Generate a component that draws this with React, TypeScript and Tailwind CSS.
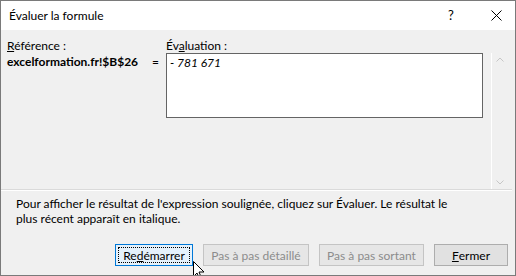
import React from 'react'

const FONT = { fontFamily: 'Lato, "Noto Sans", "Liberation Sans", sans-serif' }

function Btn({ children, w, kind }: { children: React.ReactNode; w: string; kind: 'focus' | 'off' | 'on' }) {
  if (kind === 'focus')
    return (
      <div className={`${w} h-[22px] border border-[#0078d7] bg-[#e5f1fb] p-[2px]`}>
        <div className="h-full w-full border border-dotted border-black flex items-center justify-center text-black">{children}</div>
      </div>
    )
  return (
    <div className={`${w} h-[22px] border flex items-center justify-center ${kind === 'off' ? 'border-[#c4c4c4] bg-[#e6e6e6] text-[#8c8c8c]' : 'border-[#adadad] bg-[#e1e1e1] text-black'}`}>
      {children}
    </div>
  )
}

export default function App() {
  return (
    <div className="relative w-[516px] h-[276px] border border-[#7a7a7a] bg-[#f0f0f0] flex flex-col text-[12px] leading-[15px] text-black overflow-hidden" style={FONT}>
      {/* title bar */}
      <div className="h-[29px] bg-white flex items-center pl-[8px] shrink-0">
        <span className="flex-1 text-[12px]">Évaluer la formule</span>
        <span className="w-[20px] text-center mr-[30px] text-[13px]">?</span>
        <svg width="11" height="11" viewBox="0 0 11 11" className="mr-[13px]">
          <path d="M0.5 0.5L10.5 10.5M10.5 0.5L0.5 10.5" stroke="#000" strokeWidth="1" fill="none" />
        </svg>
      </div>

      {/* main area */}
      <div className="flex h-[159px] shrink-0">
        <div className="flex-1 flex pt-[8px] pl-[6px]">
          <div className="w-[145px]">
            <div><span className="underline">R</span>éférence :</div>
            <div className="font-bold mt-[1px]">excelformation.fr!$B$26</div>
          </div>
          <div className="w-[14px] pt-[16px]">=</div>
          <div className="flex flex-col">
            <div>Év<span className="underline">a</span>luation :</div>
            <div className="w-[317px] h-[65px] border border-[#646464] bg-white px-[3px] pt-[1px] italic">- 781 671</div>
          </div>
        </div>
        <div className="w-[16px] mt-[23px] mr-[8px] border-l border-white flex flex-col items-center justify-between py-[4px] text-[#c6c6c6]">
          <svg width="8" height="5" viewBox="0 0 8 5"><path d="M0.5 4.5L4 1L7.5 4.5" stroke="currentColor" fill="none" /></svg>
          <svg width="8" height="5" viewBox="0 0 8 5"><path d="M0.5 0.5L4 4L7.5 0.5" stroke="currentColor" fill="none" /></svg>
        </div>
      </div>

      {/* separator */}
      <div className="mr-[3px] h-px bg-[#dadada]" />
      <div className="mr-[3px] h-px bg-white" />

      {/* help text */}
      <div className="pl-[15px] w-[450px] pt-[5px] h-[52px]">
        Pour afficher le résultat de l'expression soulignée, cliquez sur Évaluer. Le résultat le plus récent apparaît en italique.
      </div>

      {/* buttons */}
      <div className="flex justify-end gap-[10px] pr-[7px] mt-[1px]">
        <Btn w="w-[78px]" kind="focus">Re<span className="underline">d</span>émarrer</Btn>
        <Btn w="w-[106px]" kind="off">Pas à pas détaillé</Btn>
        <Btn w="w-[105px]" kind="off">Pas à pas sortant</Btn>
        <Btn w="w-[74px]" kind="on"><span className="underline">F</span>ermer</Btn>
      </div>

      {/* mouse cursor */}
      <svg className="absolute left-[192px] top-[260px]" width="12" height="19" viewBox="0 0 12 19">
        <path d="M0.5 0.5L0.5 15.5L4 12L6.5 18L8.5 17L6 11L11 11Z" fill="#fff" stroke="#000" strokeWidth="1" strokeLinejoin="round" />
      </svg>
    </div>
  )
}
